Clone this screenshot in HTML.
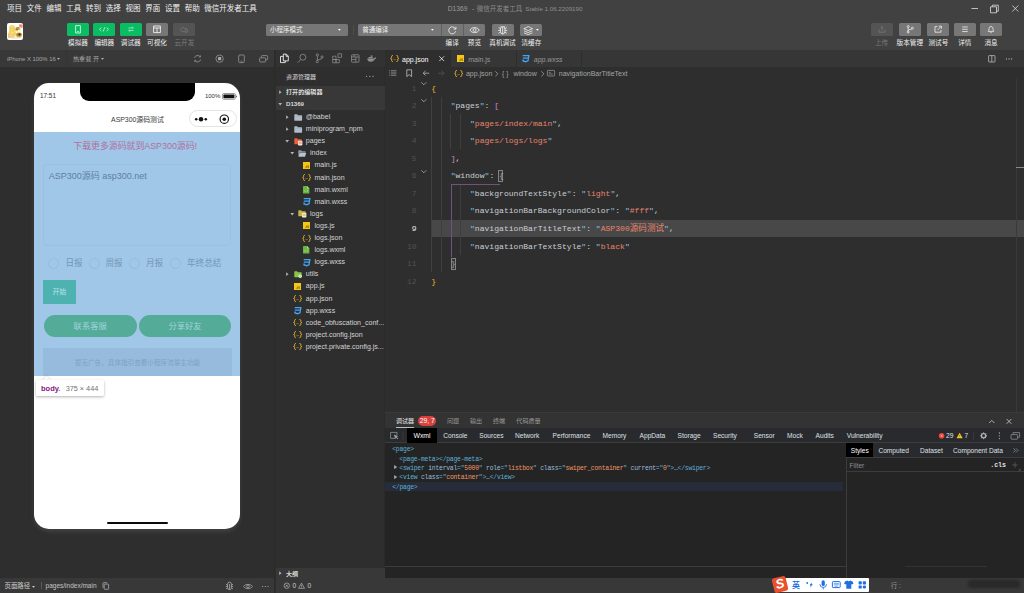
<!DOCTYPE html>
<html lang="zh"><head><meta charset="utf-8"><title>D1369 - 微信开发者工具 Stable 1.06.2209190</title>
<style>
*{box-sizing:border-box;margin:0;padding:0}
html,body{width:1024px;height:593px;overflow:hidden;background:#2e2e2e}
body{position:relative;font-family:"Liberation Sans","Noto Sans CJK SC",sans-serif;color:#ccc;font-size:7px;line-height:1}
.a{position:absolute;white-space:nowrap}
.mono{font-family:"Liberation Mono","Noto Sans CJK SC",monospace}
svg{position:absolute;overflow:visible}
/* top */
#top{left:0;top:0;width:1024px;height:50.4px;background:#414141}
.menu{top:4.2px;font-size:7.5px;color:#f0f0f0;line-height:9px}
.tb{top:23.4px;width:22px;height:12.5px;border-radius:1.6px;background:#0abd63}
.tb.g{background:#777}.tb.d{background:#545454}
.tl{top:38.6px;font-size:6.6px;line-height:8px;color:#f0f0f0;text-align:center;width:40px}
.tl.d{color:#7a7a7a}
/* sim */
#simbar{left:0;top:50.4px;width:274.4px;height:16.3px;background:#383838}
#sim{left:0;top:66.7px;width:274.4px;height:511px;background:#2e2e2e}
#simfoot{left:0;top:577.6px;width:274.4px;height:15.4px;background:#383838}
#phone{left:34.4px;top:82.9px;width:206px;height:446.4px;background:#fff;border-radius:15px;overflow:hidden;box-shadow:0 2.5px 4px 0 rgba(110,110,110,.3)}
/* explorer */
#split{left:274.3px;top:50.4px;width:1.1px;height:543px;background:#2a2a2a}
#exp{left:275.5px;top:50.4px;width:109px;height:527.3px;background:#2e2e2e;border-right:1px solid #2b2b2b}
.sec{left:0;width:109px;height:12px;background:#383838}
.row{left:0;height:12px;line-height:12px;font-size:7.05px;color:#d4d4d4}
/* editor */
#ed{left:384.5px;top:50.4px;width:639.5px;height:362px;background:#2e2e2e}
#tabs{left:0;top:0;width:639.5px;height:16.6px;background:#363636}
.tab{top:0;height:16.6px;background:#363636;border-right:1px solid #2e2e2e}
.ln{left:0;width:32px;text-align:right;font-size:8px;margin-top:.5px;color:#525252;line-height:17.55px}
.cl{left:46.8px;font-size:8.07px;margin-top:.5px;line-height:17.55px;color:#d4d4d4;white-space:pre}
.k{color:#7fc4ea}.kt{color:#c9ced6}.s{color:#e8836b}.p{color:#d4d4d4}.y{color:#e6b422}.m{color:#c586c0}
.bc{font-size:7px;line-height:9px;color:#a4a4a4}
/* debugger */
.dt{font-size:6.6px;line-height:9px}
.wx{font-size:6.4px;letter-spacing:-.224px;line-height:9px;white-space:pre;color:#ddd}
#dbg{left:384.5px;top:411.7px;width:639.5px;height:166px;background:#242424;border-top:1px solid #3a3a3a}
#status{left:275.5px;top:577.7px;width:748.5px;height:15.3px;background:#383838}
.t{color:#5db0d7}.an{color:#9bbbdc}.av{color:#f29766}
</style></head><body>
<div id="top" class="a">
<div class="a menu" style="left:7px">项目</div>
<div class="a menu" style="left:26.8px">文件</div>
<div class="a menu" style="left:46.6px">编辑</div>
<div class="a menu" style="left:66.3px">工具</div>
<div class="a menu" style="left:86px">转到</div>
<div class="a menu" style="left:105.8px">选择</div>
<div class="a menu" style="left:125.5px">视图</div>
<div class="a menu" style="left:145.3px">界面</div>
<div class="a menu" style="left:165px">设置</div>
<div class="a menu" style="left:184.8px">帮助</div>
<div class="a menu" style="left:204.3px">微信开发者工具</div>
<div class="a" style="left:447.7px;top:3.7px;font-size:6.7px;line-height:9px;color:#9c9c9c">D1369<span class="a" style="left:24.3px;top:0">-</span><span class="a" style="left:29px;top:0;font-size:6.5px;color:#8a8a8a">微信开发者工具</span><span class="a" style="left:77.6px;top:0;font-size:6.2px;color:#8f8f8f">Stable 1.06.2209190</span></div>
<svg style="left:970px;top:3px" width="54" height="12" viewBox="0 0 54 12" fill="none" stroke="#e0e0e0" stroke-width="0.8">
<path d="M1.5 5.5h6.5"/><path d="M20.5 3.8h6v6h-6z"/><path d="M22.3 3.8v-1.6h6v6h-1.8"/><path d="M42.3 2.5l6 6M48.3 2.5l-6 6"/></svg>
<div class="a" style="left:6.6px;top:23.3px;width:16.6px;height:16.6px;border-radius:2px;background:#fefefe;overflow:hidden">
<svg style="left:0;top:0" width="16.6" height="16.6" viewBox="0 0 16.6 16.6">
<path d="M1 10.500c.8-.6 1.600-.4 2.200.200l.2 4.200H1.200z" fill="#ee9a80" opacity=".8"/>
<path d="M1.200 14.200c3.500 1 9 1 13 .1" stroke="#f3c9bd" stroke-width="1" fill="none"/>
<path d="M5.100 1.900c1.900 0 3.100 1.500 3.100 3.200c0 1.100-.3 1.700-.1 2.500c.3 1 1 1.800 1 3.500c0 2.200-1.700 3.700-3.900 3.700s-3.700-1.600-3.700-3.700c0-1.500.7-2.500.8-3.500c.1-.9-.3-1.500-.3-2.500c0-1.800 1.200-3.200 3.100-3.200z" fill="#f1d36a"/>
<path d="M4.600 3c.9-.3 1.900.2 2.300 1.200c-.9-.5-1.700-.5-2.600 0zM4 9.300c1-.6 2.300-.5 3.200.3c-1.200-.2-2.200-.1-3.300.5z" fill="#f9e9a6"/>
<ellipse cx="10.700" cy="6.300" rx="2.700" ry="2.200" fill="#f0c53e"/><path d="M9 5.200l3.200-.6M8.800 6.700l3.800-.5" stroke="#5d4a1a" stroke-width=".7"/>
<ellipse cx="12.200" cy="7.800" rx="1.600" ry="1.200" fill="#f4f1e6"/>
<ellipse cx="12" cy="11.700" rx="2.900" ry="2.300" fill="#b98e2a"/><circle cx="12.500" cy="11.500" r="1.100" fill="#2f2613"/><path d="M9.600 13.300c1.500.8 3.400.8 4.700 0" stroke="#e8c24e" stroke-width=".7" fill="none"/>
<path d="M12.300 1.400c1.100-.5 2.600-.3 3.300.5c.4 1 .3 2.200-.3 2.900c-1 .2-2.200-.2-2.800-1c-.5-.8-.6-1.700-.2-2.400z" fill="#e6796a" opacity=".85"/>
</svg></div>
<div class="a tb " style="left:67px"><svg style="left:0;top:0" width="22" height="12.6" viewBox="0 0 22 12.6"><path d="M8.6 2.6h4.8v7.4H8.6z M10 8.7h2" stroke="#d8f5e6" stroke-width="0.9" fill="none"/></svg></div>
<div class="a tl " style="left:58px">模拟器</div>
<div class="a tb " style="left:93.3px"><svg style="left:0;top:0" width="22" height="12.6" viewBox="0 0 22 12.6"><path d="M8.3 4.6L6.6 6.3l1.7 1.7M13.7 4.6l1.7 1.7-1.7 1.7M11.8 4.2l-1.6 4.2" stroke="#d8f5e6" stroke-width="0.8" fill="none"/></svg></div>
<div class="a tl " style="left:84.3px">编辑器</div>
<div class="a tb " style="left:119.7px"><svg style="left:0;top:0" width="22" height="12.6" viewBox="0 0 22 12.6"><path d="M8.6 5h4.8M12.2 3.9l1.2 1.1M13.4 7.4H8.6M9.8 8.5L8.6 7.4" stroke="#b9eed3" stroke-width="0.8" fill="none"/></svg></div>
<div class="a tl " style="left:110.7px">调试器</div>
<div class="a tb g" style="left:146px"><svg style="left:0;top:0" width="22" height="12.6" viewBox="0 0 22 12.6"><path d="M7.6 3h6.8v6.6H7.6zM7.6 5h6.8M11 5v4.6" stroke="#f0f0f0" stroke-width="0.9" fill="none"/></svg></div>
<div class="a tl g" style="left:137px">可视化</div>
<div class="a tb d" style="left:173.4px"><svg style="left:0;top:0" width="22" height="12.6" viewBox="0 0 22 12.6"><path d="M8 6.4a2 2 0 0 1 3.8-.9a1.6 1.6 0 0 1 .3 3.1H9.3A1.5 1.5 0 0 1 8 6.4z M11.6 6.2a1.7 1.7 0 0 1 3 1.2a1.4 1.4 0 0 1-1.2 1.9h-1.6" stroke="#7a7a7a" stroke-width="0.7" fill="none"/></svg></div>
<div class="a tl d" style="left:164.4px">云开发</div>
<div class="a" style="left:265.5px;top:23.5px;width:82.5px;height:12.2px;border-radius:1.6px;background:#777;color:#f0f0f0;font-size:6.5px;line-height:12.6px;padding-left:4.4px">小程序模式<svg style="right:6.8px;top:5.400px" width="2.800" height="1.700" viewBox="0 0 2.800 1.700"><path d="M0 0h2.800L1.400 1.700z" fill="#fff"/></svg></div>
<div class="a" style="left:352.8px;top:24.5px;width:1px;height:10.5px;background:#4c4c4c"></div>
<div class="a" style="left:357.8px;top:23.5px;width:127px;height:12.2px;border-radius:1.6px;background:#777;color:#f0f0f0;font-size:6.5px;line-height:12.6px;padding-left:4.4px">普通编译<svg style="left:73.400px;top:5.400px" width="2.800" height="1.700" viewBox="0 0 2.800 1.700"><path d="M0 0h2.800L1.400 1.700z" fill="#fff"/></svg><span class="a" style="left:83px;top:0;width:0.6px;height:12.2px;background:#606060"></span><span class="a" style="left:105.2px;top:0;width:0.6px;height:12.2px;background:#606060"></span></div>
<svg style="left:440.8px;top:23.5px" width="44" height="12.2" viewBox="440.8 23.5 44 12.2" fill="none" stroke="#f0f0f0" stroke-width="0.85">
<path d="M455.200 28.400A3.500 3.500 0 1 0 455.400 30.800"/><path d="M455.700 26.300v2.300h-2.300" />
<path d="M469.800 29.600c1.700-3.400 7.500-3.400 9.200 0c-1.700 3.400-7.500 3.400-9.200 0z"/><circle cx="474.400" cy="29.600" r="1.500"/></svg>
<div class="a" style="left:491.8px;top:23.5px;width:22px;height:12.2px;border-radius:1.6px;background:#777"><svg style="left:0;top:0" width="22" height="12.2" viewBox="491.8 23.5 22 12.2" fill="none" stroke="#f0f0f0" stroke-width="0.85"><path d="M500.300 28.600a2.200 2.600 0 0 1 4.400 0v2.400a2.200 2.600 0 0 1-4.400 0zM502.500 26.200v7.200M501 26.200l-.8-.9M504 26.200l.8-.9M500.300 28.200l-1.900-1.200M500.300 29.900h-2.300M500.300 31.500l-1.900 1.300M504.700 28.200l1.900-1.200M504.700 29.900h2.300M504.700 31.500l1.900 1.300"/></svg></div>
<div class="a" style="left:520.2px;top:23.5px;width:22px;height:12.2px;border-radius:1.6px;background:#777"><svg style="left:0;top:0" width="22" height="12.2" viewBox="520.2 23.5 22 12.2" fill="none" stroke="#f0f0f0" stroke-width="0.8"><path d="M524 28.200c1.500-.5 3-1.300 4.400-2.200c1.400.9 2.900 1.700 4.400 2.200c-1.500.6-3 1.200-4.400 1.900c-1.400-.7-2.900-1.300-4.400-1.900zM524.200 30.300c1.400.5 2.800 1.100 4.200 1.800c1.400-.7 2.800-1.300 4.200-1.800M524.200 32.300c1.400.5 2.800 1.100 4.200 1.800c1.400-.7 2.800-1.300 4.200-1.800"/></svg><svg style="left:15.400px;top:5.400px" width="2.800" height="1.700" viewBox="0 0 2.800 1.700"><path d="M0 0h2.800L1.400 1.700z" fill="#fff"/></svg></div>
<div class="a" style="left:445.6px;top:38.6px;font-size:6.6px;line-height:8px;color:#f0f0f0">编译</div>
<div class="a" style="left:467.8px;top:38.6px;font-size:6.6px;line-height:8px;color:#f0f0f0">预览</div>
<div class="a" style="left:489.3px;top:38.6px;font-size:6.6px;line-height:8px;color:#f0f0f0">真机调试</div>
<div class="a" style="left:521.5px;top:38.6px;font-size:6.6px;line-height:8px;color:#f0f0f0">清缓存</div>
<div class="a tb d" style="left:870.5px;height:12.2px"><svg style="left:0;top:0" width="22" height="12.2" viewBox="0 0 22 12.2" fill="none" stroke="#777" stroke-width="0.8"><path d="M11 7.4V3.4M9.6 4.8L11 3.4l1.4 1.4M8 6.6v2.6h6V6.6" /></svg></div>
<div class="a tl d" style="left:861.5px">上传</div>
<div class="a tb g" style="left:898.8px;height:12.2px"><svg style="left:0;top:0" width="22" height="12.2" viewBox="0 0 22 12.2" fill="none" stroke="#f0f0f0" stroke-width="0.8"><circle cx="9.2" cy="3.6" r="1"/><circle cx="9.2" cy="9" r="1"/><circle cx="13.4" cy="5.2" r="1"/><path d="M9.2 4.6v3.4M9.2 7.6c0-1.6 3.2-0.6 3.6-1.7"/></svg></div>
<div class="a tl g" style="left:889.8px">版本管理</div>
<div class="a tb g" style="left:927.4px;height:12.2px"><svg style="left:0;top:0" width="22" height="12.2" viewBox="0 0 22 12.2" fill="none" stroke="#f0f0f0" stroke-width="0.8"><path d="M10.4 3.6H8v5.6h6V7M11.8 3.2h2.6v2.6M14.2 3.4L10.6 7"/></svg></div>
<div class="a tl g" style="left:918.4px">测试号</div>
<div class="a tb g" style="left:953.8px;height:12.2px"><svg style="left:0;top:0" width="22" height="12.2" viewBox="0 0 22 12.2" fill="none" stroke="#f0f0f0" stroke-width="0.8"><path d="M8.2 4h5.6M8.2 6.3h5.6M8.2 8.6h5.6"/></svg></div>
<div class="a tl g" style="left:944.8px">详情</div>
<div class="a tb g" style="left:980px;height:12.2px"><svg style="left:0;top:0" width="22" height="12.2" viewBox="0 0 22 12.2" fill="none" stroke="#f0f0f0" stroke-width="0.8"><path d="M8.2 8.4c1-1 .6-2.6 1-3.6a1.9 1.9 0 0 1 3.6 0c.4 1 0 2.6 1 3.6zM10.2 9.4a.9.9 0 0 0 1.6 0"/></svg></div>
<div class="a tl g" style="left:971px">消息</div>
</div>
<div id="simbar" class="a">
<div class="a" style="left:7px;top:4.4px;font-size:5.9px;line-height:8px;color:#a6a6a6">iPhone X 100% 16<svg style="position:relative;display:inline-block;margin-left:1.6px;vertical-align:0.9px" width="3" height="1.7" viewBox="0 0 3 1.7"><path d="M0 0h3L1.5 1.7z" fill="#b8b8b8"/></svg></div>
<div class="a" style="left:66px;top:0;width:0.8px;height:16.3px;background:#343434"></div>
<div class="a" style="left:73px;top:4.4px;font-size:6.1px;line-height:8px;color:#a6a6a6">热重载 开<svg style="position:relative;display:inline-block;margin-left:1.6px;vertical-align:0.9px" width="3" height="1.7" viewBox="0 0 3 1.7"><path d="M0 0h3L1.5 1.7z" fill="#b8b8b8"/></svg></div>
<svg style="left:190px;top:0" width="84" height="16.3" viewBox="190 50.4 84 16.3" fill="none" stroke="#979797" stroke-width="0.8">
<path d="M194.500 58.200A3.300 3.300 0 0 1 200.300 57.200M200.700 60A3.300 3.300 0 0 1 194.900 61"/><path d="M200.500 55.800v1.600h-1.600M194.700 62.400v-1.600h1.600" stroke-width=".7"/>
<circle cx="219.600" cy="59.100" r="3.700"/><rect x="218" y="57.500" width="3.200" height="3.200" rx=".4" fill="#a8a8a8" stroke="none"/>
<rect x="238.700" y="55.400" width="5.600" height="7.600" rx="1"/><path d="M240.600 61.600h1.800"/>
<rect x="259.600" y="58.200" width="6" height="4.200" rx=".8"/><path d="M261.400 58v-1.200c0-.5.300-.8.800-.8h4.600c.5 0 .8.300.8.800v2.600c0 .5-.3.800-.8.800h-.8"/>
</svg>
</div>
<div id="sim" class="a"></div>
<div id="simfoot" class="a">
<div class="a" style="left:4.6px;top:4.5px;font-size:6.4px;line-height:8px;color:#d0d0d0">页面路径<svg style="position:relative;display:inline-block;margin-left:2.2px;vertical-align:0.9px" width="3" height="1.7" viewBox="0 0 3 1.7"><path d="M0 0h3L1.5 1.7z" fill="#d0d0d0"/></svg></div>
<div class="a" style="left:41px;top:4.2px;width:0.7px;height:7.6px;background:#5a5a5a"></div>
<div class="a" style="left:45.6px;top:4.4px;font-size:6.5px;line-height:8px;color:#c4c4c4">pages/index/main</div>
<svg style="left:100px;top:0" width="174" height="15.5" viewBox="100 577.5 174 15.5" fill="none" stroke="#b0b0b0" stroke-width="0.75">
<rect x="104.2" y="583.6" width="4.4" height="5.2" rx="0.6"/><path d="M103 587.4v-4.6c0-.4.2-.6.6-.6h3.6"/>
<path d="M227.6 583.6a1.9 2 0 0 1 3.8 0v3.6a1.9 2 0 0 1-3.8 0zM229.5 583.6v5.4M227.6 584.6l-1.6-.8M227.6 586h-1.8M227.6 587.4l-1.6 1M231.4 584.6l1.6-.8M231.4 586h1.8M231.4 587.4l1.6 1"/>
<path d="M243.6 586c1.6-2.8 7.2-2.8 8.8 0c-1.6 2.8-7.2 2.8-8.8 0z"/><circle cx="248" cy="586" r="1.4"/>
<g fill="#b0b0b0" stroke="none"><circle cx="262.6" cy="586" r=".6"/><circle cx="265.3" cy="586" r=".6"/><circle cx="268" cy="586" r=".6"/></g></svg>
</div>
<div id="phone" class="a">
<div class="a" style="left:45.40px;top:0.00px;width:115.2px;height:18px;background:#000;border-radius:0 0 9px 9px"></div>
<div class="a" style="left:5.60px;top:8.70px;font-size:6.4px;line-height:8px;color:#333">17:51</div>
<div class="a" style="left:170.50px;top:9.40px;font-size:6px;line-height:8px;color:#333">100%</div>
<svg style="left:187.60px;top:10.00px" width="16" height="7" viewBox="0 0 16 7"><rect x="0.4" y="0.5" width="13" height="5.8" rx="1.4" fill="none" stroke="#555" stroke-width="0.6"/><rect x="1.4" y="1.5" width="11" height="3.8" rx="0.7" fill="#111"/><path d="M14 2.4c1 .2 1 1.800 0 2z" fill="#333"/></svg>
<div class="a" style="left:0.00px;top:32.30px;width:206.2px;text-align:center;font-size:6.9px;line-height:9px;color:#383838">ASP300源码测试</div>
<div class="a" style="left:154.40px;top:26.90px;width:47.8px;height:17.6px;border:0.6px solid #e3e3e3;border-radius:9px"></div>
<svg style="left:154.40px;top:26.90px" width="47.8" height="17.6" viewBox="188.8 109.8 47.8 17.6"><circle cx="196" cy="119" r="1.3" fill="#111"/><circle cx="200.8" cy="119" r="2.25" fill="#111"/><circle cx="205.6" cy="119" r="1.3" fill="#111"/><circle cx="224.1" cy="119" r="4.2" fill="none" stroke="#111" stroke-width="1.15"/><circle cx="224.1" cy="119" r="1.8" fill="#111"/></svg>
<div class="a" style="left:0.00px;top:49.00px;width:206.2px;height:243.8px;background:#a0c7e8"></div>
<div class="a" style="left:0.00px;top:58.10px;width:206.2px;text-align:left;padding-left:38.9px;font-size:8.9px;line-height:11px;color:#b0709c">下载更多源码就到ASP300源码!</div>
<div class="a" style="left:8.70px;top:81.50px;width:188.3px;height:81.9px;border:0.6px solid #9cc0e1;border-radius:4px"></div>
<div class="a" style="left:14.40px;top:88.10px;font-size:9px;line-height:11px;color:#5f7f9f">ASP300源码 asp300.net</div>
<div class="a" style="left:13.95px;top:175.20px;width:10.8px;height:10.8px;border:0.6px solid #98bbdc;border-radius:50%"></div>
<div class="a" style="left:31.00px;top:175.10px;font-size:8.6px;line-height:11px;color:#7496b6">日报</div>
<div class="a" style="left:54.60px;top:175.20px;width:10.8px;height:10.8px;border:0.6px solid #98bbdc;border-radius:50%"></div>
<div class="a" style="left:71.00px;top:175.10px;font-size:8.6px;line-height:11px;color:#7496b6">周报</div>
<div class="a" style="left:94.95px;top:175.20px;width:10.8px;height:10.8px;border:0.6px solid #98bbdc;border-radius:50%"></div>
<div class="a" style="left:111.60px;top:175.10px;font-size:8.6px;line-height:11px;color:#7496b6">月报</div>
<div class="a" style="left:135.60px;top:175.20px;width:10.8px;height:10.8px;border:0.6px solid #98bbdc;border-radius:50%"></div>
<div class="a" style="left:152.60px;top:175.10px;font-size:8.6px;line-height:11px;color:#7496b6">年终总结</div>
<div class="a" style="left:8.60px;top:197.10px;width:32.8px;height:23.8px;background:#4db2b0;color:#b8e4ea;font-size:7px;line-height:23.8px;text-align:center">开始</div>
<div class="a" style="left:9.40px;top:232.10px;width:92.8px;height:22.2px;border-radius:11.1px;background:#53ab98;color:#a0d4dd;font-size:8.3px;line-height:22.2px;text-align:center">联系客服</div>
<div class="a" style="left:104.40px;top:232.10px;width:92.4px;height:22.2px;border-radius:11.1px;background:#53ab98;color:#a0d4dd;font-size:8.3px;line-height:22.2px;text-align:center">分享好友</div>
<div class="a" style="left:8.60px;top:265.10px;width:189px;height:27.7px;background:#96bbdc;color:#7da2c8;font-size:6.6px;line-height:29px;text-align:center">暂无广告，具体指引查看小程序流量主功能</div>
<div class="a" style="left:9.60px;top:294.50px;width:5px;height:5px;background:#fff;transform:rotate(45deg);box-shadow:0 0 2px rgba(0,0,0,.25)"></div>
<div class="a" style="left:1.60px;top:297.10px;width:67.6px;height:16px;background:#fff;border-radius:1.6px;box-shadow:0 1px 3px rgba(0,0,0,.3);font-size:7px;line-height:17px;padding-left:5px"><b style="color:#881280;font-size:7.5px">body</b><b style="color:#5a7ac0;font-size:7.5px">.</b><span style="color:#737373;margin-left:5.2px;font-size:7.3px">375 × 444</span></div>
<div class="a" style="left:72.40px;top:439.10px;width:60.8px;height:2.3px;border-radius:1.2px;background:#0a0a0a"></div>
</div>
<div id="split" class="a"></div>
<div id="exp" class="a">
<div class="a" style="left:0;top:0;width:109px;height:16.5px;background:#323232"></div>
<svg style="left:0;top:0" width="109" height="16.3" viewBox="275.5 50.4 109 16.3" fill="none" stroke="#8e8e8e" stroke-width="0.8">
<g stroke="#ededed" stroke-width=".9"><path d="M282.800 54.500h3l2 2v4.800h-5z"/><path d="M285.600 54.500v2.200h2.200"/><path d="M282.800 56.800h-2.800v6.200h4.800v-1.700"/></g>
<circle cx="302.400" cy="57.600" r="3"/><path d="M300.300 59.800l-3.200 3.400"/>
<circle cx="316.800" cy="55.300" r="1.100"/><circle cx="316.800" cy="62" r="1.100"/><circle cx="321.500" cy="57.400" r="1.100"/><path d="M316.800 56.400v4.500M321.500 58.500c0 1.900-4.700 1-4.700 2.400"/>
<path d="M332.200 56.600h3.300v3.300h-3.300zM332.200 59.900h3.300v3.300h-3.300zM335.500 59.900h3.300v3.300h-3.300zM337.500 54.200h3.600v3.600h-3.600z" stroke-linejoin="miter" stroke-width=".75"/>
<rect x="351" y="55.200" width="7.500" height="7.400" rx="0.700"/><path d="M351 57.400h7.500M353.600 55.200v2.200M355.400 57.400v5.200M351 60h4.400"/>
<path d="M366.800 58.900h6.600c.3-.8 1.300-1.200 2.400-.7c-.2.900-.8 1.300-1.600 1.400c-.7 1.700-2.200 2.500-4.200 2.500c-2.100 0-3.300-1.300-3.200-3.200z" fill="#8e8e8e" stroke="none"/><path d="M368 57.300h4.200v1.400H368zM370.200 55.800h1.900v1.300h-1.900z" fill="#8e8e8e" stroke="none"/>
</svg>
<div class="a" style="left:10.50px;top:22.20px;font-size:6px;line-height:8px;color:#d8d8d8">资源管理器</div>
<svg style="left:89.50px;top:23.60px" width="10" height="4" viewBox="0 0 10 4" fill="#d0d0d0"><circle cx="1.6" cy="2.2" r=".55"/><circle cx="4.8" cy="2.2" r=".55"/><circle cx="8" cy="2.2" r=".55"/></svg>
<div class="a sec" style="top:35.60px;height:24px"></div>
<svg style="left:3.80px;top:39.40px" width="5" height="5" viewBox="0 0 5 5"><path d="M.2.3l2.300 1.900L.2 4.100z" fill="#b4b4b4"/></svg>
<div class="a" style="left:10.50px;top:37.60px;font-size:6.1px;font-weight:bold;line-height:8px;color:#d8d8d8">打开的编辑器</div>
<svg style="left:2.80px;top:52.50px" width="5" height="5" viewBox="0 0 5 5"><path d="M.3.100h3.800L2.200 2.400z" fill="#b4b4b4"/></svg>
<div class="a" style="left:10.50px;top:49.60px;font-size:6.1px;font-weight:bold;line-height:8px;color:#d8d8d8">D1369</div>
<svg style="left:10.80px;top:64.50px" width="5" height="5" viewBox="0 0 5 5"><path d="M.2.3l2.300 1.900L.2 4.100z" fill="#b4b4b4"/></svg>
<svg style="left:18.50px;top:63.30px" width="8.4" height="7" viewBox="0 0 8.4 7"><path d="M.3 .9c0-.4.2-.6.6-.6h2.2l.8.9h3.6c.4 0 .6.2.6.6v4.3c0 .4-.2.6-.6.6H.9c-.4 0-.6-.2-.6-.6z" fill="#b0bcc8"/><path d="M.3 2.2h7.8" stroke="#8f9ba8" stroke-width=".4"/></svg>
<div class="a row" style="left:30.30px;top:60.70px">@babel</div>
<svg style="left:10.80px;top:76.60px" width="5" height="5" viewBox="0 0 5 5"><path d="M.2.3l2.300 1.900L.2 4.100z" fill="#b4b4b4"/></svg>
<svg style="left:18.50px;top:75.40px" width="8.4" height="7" viewBox="0 0 8.4 7"><path d="M.3 .9c0-.4.2-.6.6-.6h2.2l.8.9h3.6c.4 0 .6.2.6.6v4.3c0 .4-.2.6-.6.6H.9c-.4 0-.6-.2-.6-.6z" fill="#b0bcc8"/><path d="M.3 2.2h7.8" stroke="#8f9ba8" stroke-width=".4"/></svg>
<div class="a row" style="left:30.30px;top:72.80px">miniprogram_npm</div>
<svg style="left:9.80px;top:89.80px" width="5" height="5" viewBox="0 0 5 5"><path d="M.3.100h3.800L2.200 2.400z" fill="#b4b4b4"/></svg>
<svg style="left:18.50px;top:87.30px" width="8.8" height="8" viewBox="0 0 8.8 8"><path d="M.3 .9c0-.4.2-.6.6-.6h2.2l.8.9h3.2c.4 0 .6.2.6.6v3.9c0 .4-.2.6-.6.6H.9c-.4 0-.6-.2-.6-.6z" fill="#e8603c"/><rect x="4" y="2.8" width="4.4" height="4.6" rx=".7" fill="#f3ded6"/><path d="M4.8 4.2h2.8M4.8 5.4h2.8" stroke="#e8603c" stroke-width=".5"/></svg>
<div class="a row" style="left:30.30px;top:84.90px">pages</div>
<svg style="left:14.30px;top:101.90px" width="5" height="5" viewBox="0 0 5 5"><path d="M.3.100h3.800L2.200 2.400z" fill="#b4b4b4"/></svg>
<svg style="left:22.90px;top:99.60px" width="8.4" height="7" viewBox="0 0 8.4 7"><path d="M.3 .9c0-.4.2-.6.6-.6h2.2l.8.9h3.2c.4 0 .6.2.6.6v.9H1.7L.3 6.2z" fill="#8e9aa8"/><path d="M1.6 2.9h6.6L7 6.7H.4z" fill="#b8c4d0"/></svg>
<div class="a row" style="left:34.50px;top:97.00px">index</div>
<svg style="left:27.50px;top:111.60px" width="7" height="7" viewBox="0 0 7 7"><rect width="7" height="7" fill="#f5c518"/><path d="M3.4 3.6v1.8c0 .5-.6.6-.9.2M5.7 3.9c-.5-.5-1.3-.2-1 .3c.3.4 1.100.3 1.100.9c0 .5-.9.600-1.300.1" stroke="#4f3f00" stroke-width=".6" fill="none"/></svg>
<div class="a row" style="left:39.00px;top:109.10px">main.js</div>
<svg style="left:26.50px;top:123.70px" width="9.4" height="7" viewBox="0 0 9.400 7" fill="none" stroke="#ecb926" stroke-width="1"><path d="M2.900.5c-1.100 0-1.300.5-1.300 1.300c0 .9.100 1.500-.9 1.700c1 .2.900.8.900 1.700c0 .8.200 1.300 1.300 1.300M6.500.5c1.100 0 1.300.5 1.300 1.300c0 .9-.1 1.500.9 1.700c-1 .2-.9.800-.9 1.700c0 .8-.2 1.300-1.300 1.300"/><path d="M3.600 4.600h.5M4.500 4.600h.5M5.400 4.600h.5" stroke-width=".7"/></svg>
<div class="a row" style="left:39.00px;top:121.20px">main.json</div>
<svg style="left:27.90px;top:135.50px" width="6.400" height="7.600" viewBox="0 0 6.400 7.600"><path d="M.6 0h3.400l2.400 2.400v4.600c0 .4-.2.600-.6.600H.6c-.4 0-.6-.2-.6-.6V.6C0 .2.200 0 .6 0z" fill="#6cb33f"/><path d="M4 0v2.400h2.400z" fill="#b6dc9a"/><path d="M2.500 3.800l-1 1l1 1M3.900 3.800l1 1l-1 1" stroke="#e8f5dc" stroke-width=".5" fill="none"/></svg>
<div class="a row" style="left:39.00px;top:133.30px">main.wxml</div>
<svg style="left:27.50px;top:147.80px" width="7.600" height="7.400" viewBox="0 0 7.600 7.400"><path d="M.8 0h6.800L6.600 6.200L3.500 7.400L.2 6.200L.5 4.600h1.300l-.1.700l1.900.7l1.900-.7l.2-1.500H.7l.2-1.300h5l.2-1.200H.6z" fill="#42a5f5"/></svg>
<div class="a row" style="left:39.00px;top:145.40px">main.wxss</div>
<svg style="left:14.30px;top:162.40px" width="5" height="5" viewBox="0 0 5 5"><path d="M.3.100h3.800L2.200 2.400z" fill="#b4b4b4"/></svg>
<svg style="left:22.90px;top:159.90px" width="8.8" height="8" viewBox="0 0 8.8 8"><path d="M.3 .9c0-.4.2-.6.6-.6h2.2l.8.9h3.2c.4 0 .6.2.6.6v3.9c0 .4-.2.6-.6.6H.9c-.4 0-.6-.2-.6-.6z" fill="#c4b44a"/><rect x="4" y="2.8" width="4.4" height="4.6" rx=".7" fill="#f4f0c8"/><path d="M4.8 4.2h2.8M4.8 5.4h2.8" stroke="#a89a3a" stroke-width=".5"/></svg>
<div class="a row" style="left:34.50px;top:157.50px">logs</div>
<svg style="left:27.50px;top:172.10px" width="7" height="7" viewBox="0 0 7 7"><rect width="7" height="7" fill="#f5c518"/><path d="M3.4 3.6v1.8c0 .5-.6.6-.9.2M5.7 3.9c-.5-.5-1.3-.2-1 .3c.3.4 1.100.3 1.100.9c0 .5-.9.600-1.300.1" stroke="#4f3f00" stroke-width=".6" fill="none"/></svg>
<div class="a row" style="left:39.00px;top:169.60px">logs.js</div>
<svg style="left:26.50px;top:184.20px" width="9.4" height="7" viewBox="0 0 9.400 7" fill="none" stroke="#ecb926" stroke-width="1"><path d="M2.900.5c-1.100 0-1.300.5-1.300 1.300c0 .9.100 1.500-.9 1.700c1 .2.900.8.900 1.700c0 .8.200 1.300 1.300 1.300M6.500.5c1.100 0 1.300.5 1.300 1.300c0 .9-.1 1.500.9 1.700c-1 .2-.9.800-.9 1.700c0 .8-.2 1.300-1.300 1.300"/><path d="M3.600 4.600h.5M4.500 4.600h.5M5.400 4.600h.5" stroke-width=".7"/></svg>
<div class="a row" style="left:39.00px;top:181.70px">logs.json</div>
<svg style="left:27.90px;top:196.00px" width="6.400" height="7.600" viewBox="0 0 6.400 7.600"><path d="M.6 0h3.400l2.400 2.400v4.600c0 .4-.2.600-.6.600H.6c-.4 0-.6-.2-.6-.6V.6C0 .2.200 0 .6 0z" fill="#6cb33f"/><path d="M4 0v2.400h2.400z" fill="#b6dc9a"/><path d="M2.500 3.800l-1 1l1 1M3.900 3.800l1 1l-1 1" stroke="#e8f5dc" stroke-width=".5" fill="none"/></svg>
<div class="a row" style="left:39.00px;top:193.80px">logs.wxml</div>
<svg style="left:27.50px;top:208.30px" width="7.600" height="7.400" viewBox="0 0 7.600 7.400"><path d="M.8 0h6.800L6.600 6.200L3.500 7.400L.2 6.200L.5 4.600h1.300l-.1.700l1.900.7l1.900-.7l.2-1.500H.7l.2-1.300h5l.2-1.200H.6z" fill="#42a5f5"/></svg>
<div class="a row" style="left:39.00px;top:205.90px">logs.wxss</div>
<svg style="left:10.80px;top:221.80px" width="5" height="5" viewBox="0 0 5 5"><path d="M.2.3l2.300 1.900L.2 4.100z" fill="#b4b4b4"/></svg>
<svg style="left:18.50px;top:220.40px" width="8.8" height="8" viewBox="0 0 8.8 8"><path d="M.3 .9c0-.4.2-.6.6-.6h2.2l.8.9h3.2c.4 0 .6.2.6.6v3.9c0 .4-.2.6-.6.6H.9c-.4 0-.6-.2-.6-.6z" fill="#8cc34a"/><circle cx="6.2" cy="5.2" r="1.7" fill="#dff0c8"/><circle cx="6.2" cy="5.2" r=".6" fill="#8cc34a"/></svg>
<div class="a row" style="left:30.30px;top:218.00px">utils</div>
<svg style="left:18.50px;top:232.60px" width="7" height="7" viewBox="0 0 7 7"><rect width="7" height="7" fill="#f5c518"/><path d="M3.4 3.6v1.8c0 .5-.6.6-.9.2M5.7 3.9c-.5-.5-1.3-.2-1 .3c.3.4 1.100.3 1.100.9c0 .5-.9.600-1.300.1" stroke="#4f3f00" stroke-width=".6" fill="none"/></svg>
<div class="a row" style="left:30.30px;top:230.10px">app.js</div>
<svg style="left:17.50px;top:244.70px" width="9.4" height="7" viewBox="0 0 9.400 7" fill="none" stroke="#ecb926" stroke-width="1"><path d="M2.900.5c-1.100 0-1.300.5-1.300 1.300c0 .9.100 1.500-.9 1.700c1 .2.900.8.900 1.700c0 .8.200 1.300 1.300 1.300M6.500.5c1.100 0 1.300.5 1.300 1.300c0 .9-.1 1.500.9 1.700c-1 .2-.9.800-.9 1.700c0 .8-.2 1.300-1.300 1.300"/><path d="M3.600 4.600h.5M4.500 4.600h.5M5.400 4.600h.5" stroke-width=".7"/></svg>
<div class="a row" style="left:30.30px;top:242.20px">app.json</div>
<svg style="left:18.50px;top:256.70px" width="7.600" height="7.400" viewBox="0 0 7.600 7.400"><path d="M.8 0h6.800L6.600 6.200L3.500 7.400L.2 6.200L.5 4.600h1.300l-.1.700l1.900.7l1.900-.7l.2-1.500H.7l.2-1.300h5l.2-1.200H.6z" fill="#42a5f5"/></svg>
<div class="a row" style="left:30.30px;top:254.30px">app.wxss</div>
<svg style="left:17.50px;top:268.90px" width="9.4" height="7" viewBox="0 0 9.400 7" fill="none" stroke="#ecb926" stroke-width="1"><path d="M2.900.5c-1.100 0-1.300.5-1.300 1.300c0 .9.100 1.500-.9 1.700c1 .2.900.8.900 1.700c0 .8.200 1.300 1.300 1.300M6.500.5c1.100 0 1.300.5 1.300 1.300c0 .9-.1 1.500.9 1.700c-1 .2-.9.800-.9 1.700c0 .8-.2 1.300-1.300 1.300"/><path d="M3.600 4.600h.5M4.500 4.600h.5M5.400 4.600h.5" stroke-width=".7"/></svg>
<div class="a row" style="left:30.30px;top:266.40px">code_obfuscation_conf...</div>
<svg style="left:17.50px;top:281.00px" width="9.4" height="7" viewBox="0 0 9.400 7" fill="none" stroke="#ecb926" stroke-width="1"><path d="M2.900.5c-1.100 0-1.300.5-1.300 1.300c0 .9.100 1.500-.9 1.700c1 .2.900.8.900 1.700c0 .8.200 1.300 1.300 1.300M6.500.5c1.100 0 1.300.5 1.300 1.300c0 .9-.1 1.500.9 1.700c-1 .2-.9.800-.9 1.700c0 .8-.2 1.300-1.300 1.300"/><path d="M3.600 4.600h.5M4.500 4.600h.5M5.400 4.600h.5" stroke-width=".7"/></svg>
<div class="a row" style="left:30.30px;top:278.50px">project.config.json</div>
<svg style="left:17.50px;top:293.10px" width="9.4" height="7" viewBox="0 0 9.400 7" fill="none" stroke="#ecb926" stroke-width="1"><path d="M2.900.5c-1.100 0-1.300.5-1.300 1.300c0 .9.100 1.500-.9 1.700c1 .2.900.8.900 1.700c0 .8.200 1.300 1.300 1.300M6.500.5c1.100 0 1.300.5 1.300 1.300c0 .9-.1 1.500.9 1.700c-1 .2-.9.800-.9 1.700c0 .8-.2 1.300-1.300 1.300"/><path d="M3.600 4.600h.5M4.500 4.600h.5M5.400 4.600h.5" stroke-width=".7"/></svg>
<div class="a row" style="left:30.30px;top:290.60px">project.private.config.js...</div>
<div class="a" style="left:0;top:517.50px;width:109px;height:9.800px;background:#383838"></div>
<svg style="left:3.80px;top:521.00px" width="5" height="5" viewBox="0 0 5 5"><path d="M.2.3l2.300 1.900L.2 4.100z" fill="#b4b4b4"/></svg>
<div class="a" style="left:10.50px;top:519.20px;font-size:6.1px;font-weight:bold;line-height:8px;color:#d8d8d8">大纲</div>
</div>
<div id="ed" class="a"><div id="tabs" class="a"></div>
<div class="a tab" style="left:0;width:66.5px;background:#2e2e2e"></div>
<div class="a tab" style="left:66.5px;width:65.5px"></div>
<div class="a tab" style="left:132px;width:65.3px"></div>
<svg style="left:5.30px;top:4.90px" width="9.4" height="7" viewBox="0 0 9.400 7" fill="none" stroke="#ecb926" stroke-width="1"><path d="M2.900.5c-1.100 0-1.300.5-1.300 1.300c0 .9.100 1.500-.9 1.700c1 .2.900.8.900 1.700c0 .8.200 1.300 1.300 1.300M6.500.5c1.100 0 1.300.5 1.300 1.300c0 .9-.1 1.500.9 1.700c-1 .2-.9.800-.9 1.700c0 .8-.2 1.300-1.300 1.300"/><path d="M3.600 4.600h.5M4.500 4.600h.5M5.400 4.600h.5" stroke-width=".7"/></svg>
<div class="a" style="left:17.50px;top:4.20px;font-size:7px;line-height:9px;color:#fff">app.json</div>
<svg style="left:54.10px;top:5.90px" width="5.4" height="5.4" viewBox="0 0 5.400 5.400" stroke="#f0f0f0" stroke-width=".8"><path d="M.3.3l4.800 4.800M5.100.3L.3 5.100"/></svg>
<svg style="left:72.50px;top:4.80px" width="7" height="7" viewBox="0 0 7 7"><rect width="7" height="7" fill="#f5c518"/><path d="M3.400 3.600v1.800c0 .5-.6.600-.9.200M5.700 3.900c-.5-.5-1.300-.2-1 .3c.3.400 1.100.300 1.100.9c0 .5-.9.600-1.300.100" stroke="#4f3f00" stroke-width=".6" fill="none"/></svg>
<div class="a" style="left:83.70px;top:4.20px;font-size:7px;line-height:9px;color:#9a9a9a">main.js</div>
<svg style="left:137.90px;top:4.60px" width="7.600" height="7.400" viewBox="0 0 7.600 7.400"><path d="M.8 0h6.800L6.600 6.200L3.500 7.400L.2 6.200L.5 4.600h1.300l-.1.700l1.900.7l1.900-.7l.2-1.500H.7l.2-1.300h5l.2-1.200H.6z" fill="#42a5f5"/></svg>
<div class="a" style="left:149.30px;top:4.20px;font-size:6.9px;line-height:9px;color:#9a9a9a;font-style:italic">app.wxss</div>
<svg style="left:600.50px;top:3.60px" width="36" height="10" viewBox="985 54 36 10" fill="none" stroke="#c8c8c8" stroke-width=".7"><rect x="988.600" y="55.600" width="6.400" height="6.400" rx=".5"/><path d="M991.800 55.600v6.400"/><g fill="#c8c8c8" stroke="none"><circle cx="1006.400" cy="58.900" r=".55"/><circle cx="1009" cy="58.900" r=".55"/><circle cx="1011.600" cy="58.900" r=".55"/></g></svg>
<svg style="left:0.50px;top:16.60px" width="70" height="12" viewBox="385 67 70 12" fill="none" stroke="#b8b8b8" stroke-width=".7"><path d="M389 70.800h.8M390.800 70.800h5.600M389 73h.8M390.800 73h5.600M389 75.200h.8M390.800 75.200h5.600"/><path d="M406.800 69.800h4.800v6.800l-2.400-2l-2.400 2z" stroke-width=".85"/><path d="M429.200 73.200h-6M425.600 70.800l-2.400 2.400l2.400 2.400" stroke-width=".8"/><path d="M438 73.200h6M441.600 70.800l2.400 2.400l-2.400 2.400" stroke="#555" stroke-width=".8"/></svg>
<svg style="left:69.10px;top:19.30px" width="9.4" height="7" viewBox="0 0 9.400 7" fill="none" stroke="#ecb926" stroke-width="1"><path d="M2.900.5c-1.100 0-1.300.5-1.300 1.300c0 .9.100 1.500-.9 1.700c1 .2.900.8.900 1.700c0 .8.200 1.300 1.300 1.300M6.500.5c1.100 0 1.300.5 1.300 1.300c0 .9-.1 1.500.9 1.700c-1 .2-.9.800-.9 1.700c0 .8-.2 1.300-1.300 1.300"/><path d="M3.600 4.600h.5M4.500 4.600h.5M5.400 4.600h.5" stroke-width=".7"/></svg>
<div class="a bc" style="left:81.40px;top:18.30px;">app.json</div>
<svg style="left:110.80px;top:20.20px" width="3.400" height="5.600" viewBox="0 0 3.400 5.600" fill="none" stroke="#a4a4a4" stroke-width=".8"><path d="M.4.3l2.500 2.500l-2.500 2.500"/></svg>
<div class="a bc" style="left:117.60px;top:18.30px;font-size:6.6px;letter-spacing:0px">{ }</div>
<div class="a bc" style="left:128.90px;top:18.30px;">window</div>
<svg style="left:156.20px;top:20.20px" width="3.400" height="5.600" viewBox="0 0 3.400 5.600" fill="none" stroke="#a4a4a4" stroke-width=".8"><path d="M.4.3l2.500 2.500l-2.500 2.500"/></svg>
<svg style="left:162.50px;top:19.20px" width="8" height="6.4" viewBox="0 0 8 6.400" fill="none" stroke="#a9a9a9" stroke-width=".65"><rect x=".4" y=".4" width="7.200" height="5.600" rx=".7"/><path d="M1.800 2.400h1.800M1.800 4h4"/></svg>
<div class="a bc" style="left:174.25px;top:18.30px;">navigationBarTitleText</div>
<div class="a" style="left:46.50px;top:169.15px;width:593px;height:17.55px;background:#484848"></div>
<div class="a" style="left:46.00px;top:46.30px;width:.8px;height:175.5px;background:#404040"></div>
<div class="a" style="left:56.10px;top:46.30px;width:.8px;height:175.5px;background:#3e3e3e"></div>
<div class="a" style="left:65.70px;top:63.85px;width:.8px;height:35.1px;background:#404040"></div>
<div class="a" style="left:75.30px;top:63.85px;width:.8px;height:35.1px;background:#3e3e3e"></div>
<div class="a" style="left:75.30px;top:134.05px;width:.8px;height:70.2px;background:#3e3e3e"></div>
<div class="a" style="left:66.40px;top:133.60px;width:48.8px;height:72.8px;border-left:.65px solid #74507e;border-top:.65px solid #74507e"></div>
<div class="a" style="left:113.70px;top:119.50px;width:5px;height:12.4px;border:.6px solid #7a8a7a;background:rgba(120,140,120,.10)"></div>
<div class="a" style="left:66.00px;top:207.25px;width:5px;height:12.4px;border:.6px solid #7a8a7a;background:rgba(120,140,120,.10)"></div>
<div class="a ln mono" style="top:28.75px;color:#525252">1</div>
<div class="a cl mono" style="top:28.75px"><span class="y">{</span></div>
<div class="a ln mono" style="top:46.30px;color:#525252">2</div>
<div class="a cl mono" style="top:46.30px">    <span class="k">"</span><span class="kt">pages</span><span class="k">"</span>: <span class="m">[</span></div>
<div class="a ln mono" style="top:63.85px;color:#525252">3</div>
<div class="a cl mono" style="top:63.85px">        <span class="k">"</span><span class="s">pages/index/main</span><span class="k">"</span>,</div>
<div class="a ln mono" style="top:81.40px;color:#525252">4</div>
<div class="a cl mono" style="top:81.40px">        <span class="k">"</span><span class="s">pages/logs/logs</span><span class="k">"</span></div>
<div class="a ln mono" style="top:98.95px;color:#525252">5</div>
<div class="a cl mono" style="top:98.95px">    <span class="m">]</span>,</div>
<div class="a ln mono" style="top:116.50px;color:#525252">6</div>
<div class="a cl mono" style="top:116.50px">    <span class="k">"</span><span class="kt">window</span><span class="k">"</span>: <span class="m">{</span></div>
<div class="a ln mono" style="top:134.05px;color:#525252">7</div>
<div class="a cl mono" style="top:134.05px">        <span class="k">"</span><span class="kt">backgroundTextStyle</span><span class="k">"</span>: <span class="k">"</span><span class="s">light</span><span class="k">"</span>,</div>
<div class="a ln mono" style="top:151.60px;color:#525252">8</div>
<div class="a cl mono" style="top:151.60px">        <span class="k">"</span><span class="kt">navigationBarBackgroundColor</span><span class="k">"</span>: <span class="k">"</span><span class="s">#fff</span><span class="k">"</span>,</div>
<div class="a ln mono" style="top:169.15px;color:#e8e8e8">9</div>
<div class="a cl mono" style="top:169.15px">        <span class="k">"</span><span class="kt">navigationBarTitleText</span><span class="k">"</span>: <span class="k">"</span><span class="s">ASP300<span style="font-size:8.6px">源码测试</span></span><span class="k">"</span>,</div>
<div class="a ln mono" style="top:186.70px;color:#525252">10</div>
<div class="a cl mono" style="top:186.70px">        <span class="k">"</span><span class="kt">navigationBarTextStyle</span><span class="k">"</span>: <span class="k">"</span><span class="s">black</span><span class="k">"</span></div>
<div class="a ln mono" style="top:204.25px;color:#525252">11</div>
<div class="a cl mono" style="top:204.25px">    <span class="m">}</span></div>
<div class="a ln mono" style="top:221.80px;color:#525252">12</div>
<div class="a cl mono" style="top:221.80px"><span class="y">}</span></div>
<svg style="left:36.40px;top:31.45px" width="5.600" height="3.400" viewBox="0 0 5.600 3.400" fill="none" stroke="#c0c0c0" stroke-width=".7"><path d="M.3.3l2.500 2.500l2.500-2.500"/></svg>
<svg style="left:36.40px;top:49.00px" width="5.600" height="3.400" viewBox="0 0 5.600 3.400" fill="none" stroke="#c0c0c0" stroke-width=".7"><path d="M.3.3l2.500 2.500l2.500-2.500"/></svg>
<svg style="left:36.40px;top:119.20px" width="5.600" height="3.400" viewBox="0 0 5.600 3.400" fill="none" stroke="#c0c0c0" stroke-width=".7"><path d="M.3.3l2.500 2.500l2.500-2.500"/></svg>
<div class="a" style="left:631.50px;top:28.60px;width:.7px;height:333px;background:#3a3a3a"></div>
<div class="a" style="left:631.50px;top:116.50px;width:8px;height:.9px;background:#8a8a8a"></div>
</div>
<div id="dbg" class="a">
<div class="a" style="left:0;top:0;width:639.5px;height:16.9px;background:#333"></div>
<div class="a" style="left:11.50px;top:3.90px;font-size:6px;line-height:8px;color:#e8e8e8">调试器</div>
<div class="a" style="left:11.50px;top:14.70px;width:17.6px;height:.9px;background:#bdbdbd"></div>
<div class="a" style="left:33.70px;top:3.30px;width:18.2px;height:10.2px;border-radius:5.1px;background:#d8423e;color:#fff;font-size:6.7px;line-height:10.2px;text-align:center">29, 7</div>
<div class="a" style="left:62.50px;top:3.90px;font-size:6.1px;line-height:8px;color:#9a9a9a">问题</div>
<div class="a" style="left:85.50px;top:3.90px;font-size:6.1px;line-height:8px;color:#9a9a9a">输出</div>
<div class="a" style="left:108.50px;top:3.90px;font-size:6.1px;line-height:8px;color:#9a9a9a">终端</div>
<div class="a" style="left:131.80px;top:3.90px;font-size:6.1px;line-height:8px;color:#9a9a9a">代码质量</div>
<svg style="left:600.50px;top:1.50px" width="32" height="12" viewBox="985 414 32 12" fill="none" stroke="#d8d8d8" stroke-width=".75"><path d="M989.200 423l2.600-2.600l2.600 2.600"/><path d="M1006.600 419l4.800 4.800M1011.400 419l-4.800 4.800"/></svg>
<div class="a" style="left:0;top:-0.8px">
<div class="a" style="left:0;top:16.40px;width:639.5px;height:14.9px;background:#292a2d;border-bottom:.6px solid #3c3c3c"></div>
<svg style="left:4.50px;top:19.30px" width="16" height="10" viewBox="389 431 16 10" fill="none" stroke="#9aa0a6" stroke-width=".7"><path d="M395.400 438.400h-4.800v-6h6.400v3.200" stroke-dasharray="none"/><path d="M394 434.600l1 4.400l1-1.400l1.600 1.600l.7-.7l-1.600-1.600l1.400-.7z" fill="#9aa0a6" stroke="none"/><path d="M403 431.600v8.800" stroke="#444" stroke-width=".6"/></svg>
<div class="a" style="left:22.50px;top:16.50px;width:30px;height:14.4px;background:#000"></div>
<div class="a dt" style="left:28.90px;top:19.60px;color:#fff;font-size:6.9px">Wxml</div>
<div class="a dt" style="left:58.80px;top:19.60px;color:#dfe1e5">Console</div>
<div class="a dt" style="left:94.80px;top:19.60px;color:#dfe1e5">Sources</div>
<div class="a dt" style="left:130.50px;top:19.60px;color:#dfe1e5">Network</div>
<div class="a dt" style="left:168.10px;top:19.60px;color:#dfe1e5">Performance</div>
<div class="a dt" style="left:218.10px;top:19.60px;color:#dfe1e5">Memory</div>
<div class="a dt" style="left:255.10px;top:19.60px;color:#dfe1e5">AppData</div>
<div class="a dt" style="left:293.10px;top:19.60px;color:#dfe1e5">Storage</div>
<div class="a dt" style="left:328.50px;top:19.60px;color:#dfe1e5">Security</div>
<div class="a dt" style="left:369.30px;top:19.60px;color:#dfe1e5">Sensor</div>
<div class="a dt" style="left:402.50px;top:19.60px;color:#dfe1e5">Mock</div>
<div class="a dt" style="left:431.10px;top:19.60px;color:#dfe1e5">Audits</div>
<div class="a dt" style="left:462.30px;top:19.60px;color:#dfe1e5">Vulnerability</div>
<svg style="left:551.50px;top:17.30px" width="88" height="14" viewBox="936 429 88 14">
<circle cx="941.600" cy="435.800" r="2.800" fill="#e8453c"/><path d="M940.700 434.900l1.800 1.800M942.500 434.900l-1.800 1.800" stroke="#fff" stroke-width=".55"/>
<path d="M959.600 432.800l3.100 5.500h-6.200z" fill="#f2c12e"/><path d="M959.600 435v1.600" stroke="#5a4500" stroke-width=".5"/>
<path d="M973.400 431.600v8.400" stroke="#444" stroke-width=".6"/>
<g fill="none" stroke="#b0b4b8"><circle cx="983.600" cy="435.800" r="2.100" stroke-width="1.300"/><path d="M983.600 432.400v1M983.600 438.200v1M980.200 435.800h1M986 435.800h1M981.200 433.400l.7.700M985.300 437.500l.7.700M981.200 438.200l.7-.7M985.300 434.100l.7-.7" stroke-width="1"/></g>
<g fill="#b0b4b8"><circle cx="999.400" cy="433" r=".65"/><circle cx="999.400" cy="435.800" r=".65"/><circle cx="999.400" cy="438.600" r=".65"/></g>
<g fill="none" stroke="#8a8e92" stroke-width=".8"><rect x="1011" y="434.600" width="6.600" height="4.600" rx=".5"/><path d="M1013 434.400v-1.800h6.600v4.600h-1.800"/></g>
</svg>
<div class="a dt" style="left:561.50px;top:19.60px;color:#dfe1e5">29</div>
<div class="a dt" style="left:579.90px;top:19.60px;color:#dfe1e5">7</div>
<div class="a" style="left:0;top:31.50px;width:461.5px;height:136px;background:#242424"></div>
<div class="a" style="left:0;top:69.70px;width:458.5px;height:9.300px;background:#262c3a"></div>
<div class="a mono wx" style="left:7.70px;top:33.60px"><span class="t">&lt;page&gt;</span></div>
<div class="a mono wx" style="left:14.80px;top:42.95px"><span class="t">&lt;page-meta&gt;&lt;/page-meta&gt;</span></div>
<div class="a mono wx" style="left:14.80px;top:52.25px"><span class="t">&lt;swiper</span> <span class="an">interval</span><span class="t">="</span><span class="av">5000</span><span class="t">"</span> <span class="an">role</span><span class="t">="</span><span class="av">listbox</span><span class="t">"</span> <span class="an">class</span><span class="t">="</span><span class="av">swiper_container</span><span class="t">"</span> <span class="an">current</span><span class="t">="</span><span class="av">0</span><span class="t">"</span><span class="t">&gt;</span><span style="color:#ddd">…</span><span class="t">&lt;/swiper&gt;</span></div>
<div class="a mono wx" style="left:14.80px;top:61.55px"><span class="t">&lt;view</span> <span class="an">class</span><span class="t">="</span><span class="av">container</span><span class="t">"</span><span class="t">&gt;</span><span style="color:#ddd">…</span><span class="t">&lt;/view&gt;</span></div>
<div class="a mono wx" style="left:7.70px;top:70.90px"><span class="t">&lt;/page&gt;</span></div>
<svg style="left:9.10px;top:53.50px" width="3.600" height="4.400" viewBox="0 0 3.200 4"><path d="M0 0l3 1.900L0 3.800z" fill="#9aa0a6"/></svg>
<svg style="left:9.10px;top:62.80px" width="3.600" height="4.400" viewBox="0 0 3.200 4"><path d="M0 0l3 1.900L0 3.800z" fill="#9aa0a6"/></svg>
<div class="a" style="left:461.50px;top:31.50px;width:.8px;height:136px;background:#3c3c3c"></div>
<div class="a" style="left:462.30px;top:31.50px;width:177.200px;height:14.200px;background:#292a2d;border-bottom:.6px solid #3c3c3c"></div>
<div class="a" style="left:461.70px;top:31.50px;width:27px;height:14px;background:#000"></div>
<div class="a dt" style="left:466.30px;top:34.50px;color:#fff">Styles</div>
<div class="a dt" style="left:493.90px;top:34.50px;color:#dfe1e5">Computed</div>
<div class="a dt" style="left:535.50px;top:34.50px;color:#dfe1e5">Dataset</div>
<div class="a dt" style="left:568.50px;top:34.50px;color:#dfe1e5">Component Data</div>
<svg style="left:628.10px;top:36.30px" width="6" height="5" viewBox="0 0 6 5" fill="none" stroke="#9aa0a6" stroke-width=".7"><path d="M.4.4l2 2l-2 2M3 .4l2 2l-2 2"/></svg>
<div class="a" style="left:462.30px;top:45.90px;width:177.200px;height:14.600px;background:#242424;border-bottom:.6px solid #3c3c3c"></div>
<div class="a dt" style="left:465.10px;top:49.30px;color:#8a8e92">Filter</div>

<div class="a mono" style="left:605.70px;top:48.90px;font-size:6.600px;font-weight:bold;line-height:9px;color:#dfe1e5">.cls</div>
<svg style="left:627.10px;top:50.30px" width="10" height="10" viewBox="0 0 10 10" fill="none" stroke="#6a6e72" stroke-width=".6"><path d="M3 .4v5.200M.4 3h5.200"/><path d="M8.400 6.600v1.800h-1.800z" fill="#6a6e72" stroke="none"/></svg>
<div class="a" style="left:462.30px;top:60.70px;width:177.200px;height:107px;background:#242424"></div>
<div class="a" style="left:0;top:154.30px;width:461.5px;height:.8px;background:#3c3c3c"></div><div class="a" style="left:520px;top:154.30px;width:82px;height:.8px;background:#333"></div>

</div>
</div>
<div id="status" class="a">
<svg style="left:7.50px;top:4.30px" width="30" height="8" viewBox="0 0 30 8" fill="none" stroke="#c8c8c8" stroke-width=".6"><circle cx="3.800" cy="3.700" r="2.700"/><path d="M2.700 2.600l2.200 2.200M4.900 2.600l-2.200 2.200"/><path d="M18.500 1.100l3 5.200h-6z"/><path d="M18.500 2.900v1.800M18.500 5.200v.5"/></svg>
<div class="a" style="left:16.90px;top:4.10px;font-size:6.600px;line-height:8px;color:#d0d0d0">0</div>
<div class="a" style="left:32.10px;top:4.10px;font-size:6.600px;line-height:8px;color:#d0d0d0">0</div>
<div class="a" style="left:615.30px;top:3.90px;font-size:6.400px;line-height:8px;color:#9a9a9a">行 :</div>
<div class="a" style="left:692.50px;top:2.80px;width:52px;height:7.500px;background:#2a2a2a;border-radius:3px;filter:blur(1.2px)"></div>
<div class="a" style="left:499.30px;top:0.70px;width:94.200px;height:13.600px;background:#fff;border-radius:1px"></div>
<div class="a" style="left:497.10px;top:-1.10px;width:14px;height:14.600px;background:#e9502c;border-radius:2.500px;transform:rotate(-14deg);color:#fff;font-weight:bold;font-size:13px;line-height:14.400px;text-align:center;font-style:italic">S</div>
<div class="a" style="left:516.50px;top:2.90px;font-size:8px;font-weight:bold;line-height:9px;color:#1f6fe0">英</div>
<svg style="left:524.50px;top:0.70px" width="70" height="13.600" viewBox="800 578.400 70 13.600" fill="#1f6fe0"><circle cx="807.200" cy="583.400" r=".9"/><path d="M810.500 584.400a1 1 0 1 1 .9 1.500c0 .9-.4 1.500-1.100 1.900c.3-.7.400-1.200.2-1.700a1 1 0 0 1 0-1.700z"/>
<rect x="821.600" y="580.600" width="3.200" height="5.800" rx="1.600"/><path d="M819.900 584.600a3.300 3.300 0 0 0 6.600 0M823.200 588v1.800" fill="none" stroke="#1f6fe0" stroke-width=".9"/>
<rect x="832.400" y="582" width="7.800" height="6" rx=".7" fill="none" stroke="#1f6fe0" stroke-width="1"/><path d="M833.800 583.800h5M833.800 585.200h5M834.600 586.600h3.400" stroke="#1f6fe0" stroke-width=".6"/>
<path d="M845 582l2.300-1c.6 1 2.400 1 3 0l2.300 1l.9 2.200l-1.700.8l-.5-.7v4.900h-5v-4.900l-.5.700l-1.700-.8z"/>
<rect x="858.600" y="581.600" width="3.200" height="3.200" rx=".6"/><rect x="862.800" y="581.600" width="3.200" height="3.200" rx=".6"/><rect x="858.600" y="585.800" width="3.200" height="3.200" rx=".6"/><rect x="862.800" y="585.800" width="3.200" height="3.200" rx="1.400"/></svg>
</div>
</body></html>
